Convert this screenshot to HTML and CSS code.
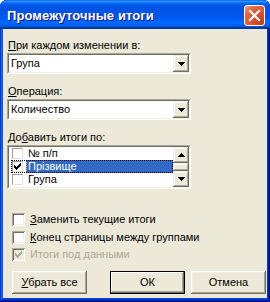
FILE: index.html
```
<!DOCTYPE html>
<html lang="ru">
<head>
  <meta charset="UTF-8">
  <title>Промежуточные итоги</title>
  <link rel="stylesheet" href="styles.css">
</head>
<body>

  <div class="window">
    <!-- Title bar -->
    <div class="title-bar">
      <span class="title">Промежуточные итоги</span>
      <span class="close-btn">
        <svg width="19" height="19" viewBox="0 0 19 19">
          <path d="M5 5L14 14M14 5L5 14" stroke="#fff" stroke-width="2.2" stroke-linecap="square"/>
        </svg>
      </span>
    </div>

    <!-- Dialog body -->
    <div class="dialog">
      <div class="label first"><u>П</u>ри каждом изменении в:</div>
      <div class="combo">
        <div class="field">
          <span class="field-text">Група</span>
          <span class="arrow-btn">
            <svg width="7" height="4" viewBox="0 0 7 4" shape-rendering="crispEdges"><path d="M0 0h7v1h-1v1h-1v1h-1v1h-1v-1h-1v-1h-1v-1h-1z"/></svg>
          </span>
        </div>
      </div>

      <div class="label"><u>О</u>перация:</div>
      <div class="combo">
        <div class="field">
          <span class="field-text">Количество</span>
          <span class="arrow-btn">
            <svg width="7" height="4" viewBox="0 0 7 4" shape-rendering="crispEdges"><path d="M0 0h7v1h-1v1h-1v1h-1v1h-1v-1h-1v-1h-1v-1h-1z"/></svg>
          </span>
        </div>
      </div>

      <div class="label">До<u>б</u>авить итоги по:</div>
      <div class="listbox">
        <div class="list-inner">
          <div class="items">
            <div class="item">
              <span class="list-check"></span>
              <span class="item-text">№ п/п</span>
            </div>
            <div class="item selected">
              <span class="list-check">
                <svg width="7" height="7" viewBox="0 0 7 7" shape-rendering="crispEdges"><path d="M0 2h1v3h-1zM1 3h1v3h-1zM2 4h1v3h-1zM3 3h1v3h-1zM4 2h1v3h-1zM5 1h1v3h-1zM6 0h1v3h-1z"/></svg>
              </span>
              <span class="item-text">Прізвище</span>
            </div>
            <div class="item">
              <span class="list-check"></span>
              <span class="item-text">Група</span>
            </div>
          </div>
          <div class="scrollbar">
            <span class="scroll-btn">
              <svg width="7" height="4" viewBox="0 0 7 4" shape-rendering="crispEdges"><path d="M3 0h1v1h1v1h1v1h1v1h-7v-1h1v-1h1v-1h1z"/></svg>
            </span>
            <span class="scroll-thumb"></span>
            <span class="scroll-btn">
              <svg width="7" height="4" viewBox="0 0 7 4" shape-rendering="crispEdges"><path d="M0 0h7v1h-1v1h-1v1h-1v1h-1v-1h-1v-1h-1v-1h-1z"/></svg>
            </span>
          </div>
        </div>
      </div>

      <!-- Options -->
      <div class="options">
        <div class="option">
          <span class="check"></span>
          <span><u>З</u>аменить текущие итоги</span>
        </div>
        <div class="option">
          <span class="check"></span>
          <span><u>К</u>онец страницы между группами</span>
        </div>
        <div class="option disabled">
          <span class="check">
            <svg width="7" height="7" viewBox="0 0 7 7" shape-rendering="crispEdges"><path d="M0 2h1v3h-1zM1 3h1v3h-1zM2 4h1v3h-1zM3 3h1v3h-1zM4 2h1v3h-1zM5 1h1v3h-1zM6 0h1v3h-1z"/></svg>
          </span>
          <span>Итоги под данными</span>
        </div>
      </div>

      <!-- Buttons -->
      <div class="buttons">
        <span class="btn"><u>У</u>брать все</span>
        <span class="btn default">ОК</span>
        <span class="btn">Отмена</span>
      </div>
    </div>
  </div>

</body>
</html>
```

FILE: styles.css
```
body {
  margin: 0;
  font-family: "Liberation Sans", Arial, sans-serif;
  font-size: 11px;
  color: #000;
  background: #fff;
}
.window {
  width: 270px;
  height: 302px;
  box-sizing: border-box;
  padding: 0 3px 4px 3px;
  border-radius: 7px 7px 0 0;
  background-color: #0841d6;
  box-shadow: inset -1px -1px #00138c, inset 1px 1px #0831d9, inset -2px -2px #001ea0, inset 2px 2px #166aee, inset -3px -3px #003bda, inset 3px 3px #0855dd;
  display: flex;
  flex-direction: column;
  overflow: hidden;
}
/* Title bar */
.title-bar {
  height: 29px;
  margin: 0 -3px;
  padding: 0 5px 0 7px;
  display: flex;
  align-items: center;
  justify-content: space-between;
  border-radius: 7px 7px 0 0;
  background: linear-gradient(180deg, #0058ee 0%, #3593ff 4%, #288eff 6%, #127dff 8%, #036ffc 10%, #0262ee 14%, #0057e5 20%, #0054e3 24%, #0055eb 56%, #005bf5 66%, #026afe 76%, #0062ef 86%, #0052d6 92%, #0040ab 94%, #003092 100%);
}
.title {
  color: #fff;
  font-weight: bold;
  font-size: 13px;
  letter-spacing: 0.1px;
  text-shadow: 1px 1px #0f1089;
  margin-top: 1px;
}
.close-btn {
  width: 19px;
  height: 19px;
  border: 1px solid #fff;
  border-radius: 3px;
  margin-top: 2px;
  background: radial-gradient(circle at 85% 85%, #c23c14 0%, #dc5530 45%, #e56a45 75%, #f3a58a 100%);
  display: flex;
}
/* Body */
.dialog {
  flex: 1;
  background: #ece9d8;
  padding: 10px 0 0 4px;
}
.label {
  height: 13px;
  line-height: 13px;
  padding-left: 1px;
  margin-top: 11px;
}
.label.first {
  margin-top: 0;
}
.combo,
.listbox {
  width: 184px;
  box-sizing: border-box;
  margin-top: 1px;
  border: 1px solid;
  border-color: #aca899 #fff #fff #aca899;
}
.combo {
  height: 21px;
}
.listbox {
  height: 44px;
}
.field,
.list-inner {
  height: 100%;
  box-sizing: border-box;
  border: 1px solid;
  border-color: #716f64 #f1efe2 #f1efe2 #716f64;
  background: #fff;
  display: flex;
}
.field-text {
  flex: 1;
  line-height: 17px;
  padding-left: 2px;
}
.arrow-btn,
.scroll-btn,
.scroll-thumb {
  width: 16px;
  background: #ece9d8;
  box-shadow: inset -1px -1px #716f64, inset 1px 1px #f1efe2, inset -2px -2px #aca899, inset 2px 2px #fff;
  display: flex;
  align-items: center;
  justify-content: center;
}
.arrow-btn {
  height: 17px;
}
/* List */
.items {
  flex: 1;
}
.item {
  height: 13px;
  margin-left: 2px;
  padding-left: 1px;
  display: flex;
  align-items: center;
}
.list-check {
  width: 11px;
  height: 11px;
  box-sizing: border-box;
  border: 1px solid;
  border-color: #9d9d9d #e2e0d8 #e2e0d8 #9d9d9d;
  margin-right: 3px;
  display: flex;
  align-items: center;
  justify-content: center;
}
.item-text {
  flex: 1;
  height: 13px;
  line-height: 13px;
  padding-left: 2px;
}
.item.selected {
  outline: 1px dotted #000;
  outline-offset: -1px;
}
.item.selected .item-text {
  background: #316ac5;
  color: #fff;
  outline: 1px dotted #f0a838;
  outline-offset: -1px;
}
.scrollbar {
  width: 16px;
  display: flex;
  flex-direction: column;
}
.scroll-btn {
  height: 16px;
}
.scroll-thumb {
  height: 8px;
}
/* Options */
.options {
  margin-top: 24px;
  padding-left: 5px;
}
.option {
  height: 13px;
  line-height: 13px;
  display: flex;
  align-items: center;
  margin-top: 5px;
}
.option:first-child {
  margin-top: 0;
}
.option.disabled {
  margin-top: 4px;
  color: #aca899;
}
.check {
  width: 13px;
  height: 13px;
  margin-right: 5px;
  background: #fff;
  box-shadow: inset 1px 1px #aca899, inset -1px -1px #fff, inset 2px 2px #716f64, inset -2px -2px #f1efe2;
  display: flex;
  align-items: center;
  justify-content: center;
}
.option.disabled .check {
  background: #ece9d8;
}
.option.disabled .check svg {
  fill: #aca899;
}
/* Buttons */
.buttons {
  margin-top: 10px;
  display: flex;
}
.btn {
  width: 75px;
  height: 23px;
  box-sizing: border-box;
  line-height: 23px;
  text-align: center;
  background: #ece9d8;
  box-shadow: inset -1px -1px #716f64, inset 1px 1px #fff, inset -2px -2px #aca899, inset 2px 2px #f1efe2;
  margin-left: 5px;
}
.btn.default {
  margin-left: 23px;
  box-shadow: inset 0 0 0 1px #000, inset -2px -2px #716f64, inset 2px 2px #fff, inset -3px -3px #aca899;
}
.btn.default + .btn {
  margin-left: 6px;
}
```
